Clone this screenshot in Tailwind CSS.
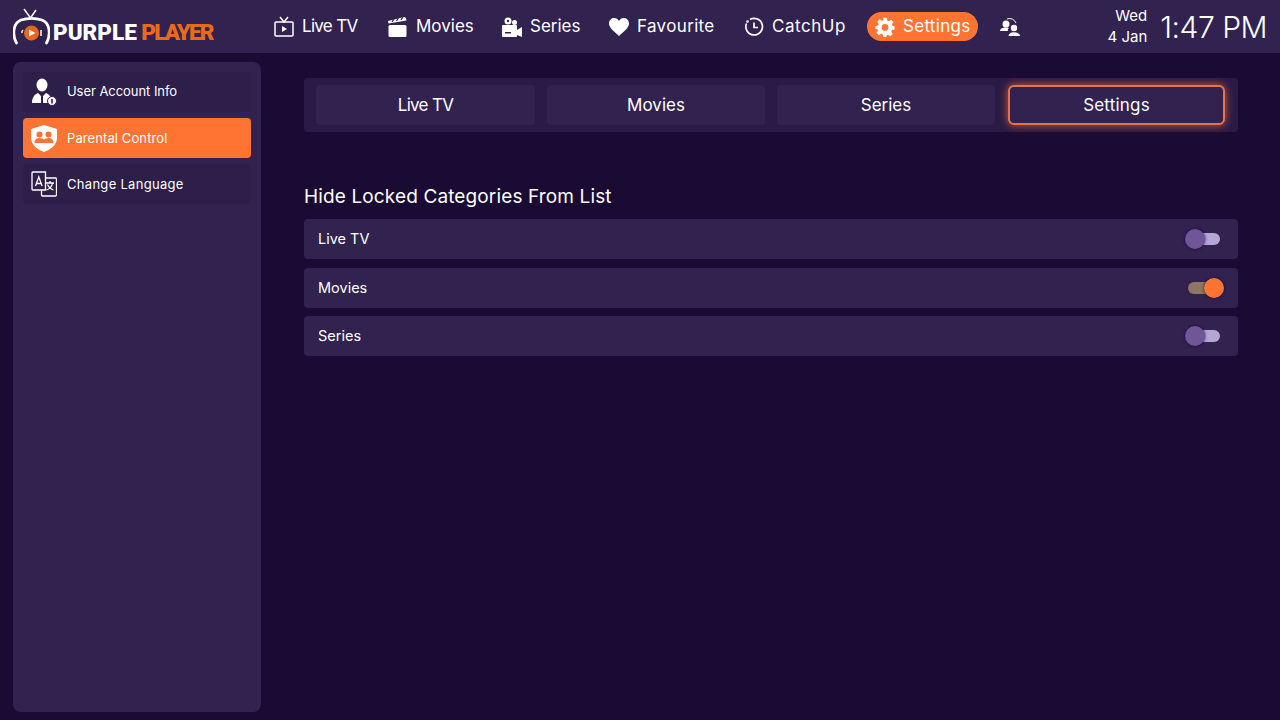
<!DOCTYPE html>
<html><head><meta charset="utf-8"><script src="https://cdn.jsdelivr.net/npm/@tailwindcss/browser@4"></script></head>
<body class="m-0">
<div class="w-[1280px] h-[720px] overflow-hidden bg-[#1a0b35] text-white font-['Inter','Noto_Sans',sans-serif] flex flex-col">
<header class="h-[53px] bg-[#32224f] flex items-center shrink-0 relative">
  <div class="w-[274px] pl-[13px] flex items-center shrink-0">
    <svg width="37" height="37" viewBox="0 0 37 37" class="mt-[-1px]" fill="none">
      <path d="M11 1 L17.500 10 L23 2" stroke="#fff" stroke-width="1.500"/>
      <path d="M3.500 35 C-1 27 0 15 8 12 C14 10 23 10 29 12 C37 15 38 27 33.500 35" stroke="#fff" stroke-width="2.800" stroke-linecap="round" fill="none"/>
      <circle cx="18.500" cy="25" r="7.500" fill="#e8651c"/><path d="M16 21.500 L22.500 25 L16 28.500Z" fill="#fff"/>
      <path d="M9 25a3 3 0 0 1 1-3M28 22v6" stroke="#fff" stroke-width="1.500"/>
    </svg>
    <div class="ml-[3px] mt-[11px] text-[22.5px] leading-none font-black font-['Roboto','Liberation_Sans',sans-serif] whitespace-nowrap">PURPLE <span class="text-[#ea6a1c] ml-[-1px] tracking-[-1.800px]">PLAYER</span></div>
  </div>
  <nav class="flex items-center text-[17px] h-full">
    <div class="flex items-center gap-[8px] w-[114px]">
      <svg width="20" height="22" viewBox="0 0 20 22" fill="none" stroke="#fff" stroke-width="1.500"><rect x="1" y="6" width="18" height="14" rx="1"/><path d="M6 1l4 5 4-5"/><path d="M8 10l5 3-5 3z" fill="#fff" stroke="none"/></svg>
      <span class="tracking-[-0.7px]">Live TV</span></div>
    <div class="flex items-center gap-[8px] w-[114px]">
      <svg width="20" height="20" viewBox="0 0 20 20" fill="#fff"><rect x="0.500" y="8" width="18" height="12" rx="1.500"/><path d="M0.500 6.500 L0 4 L16 0 Q17.500 0 18 1.500 L18.500 3.500Z"/><path d="M4 4.800L6 2M8.500 3.800L10.500 1M13 2.800L15 0" stroke="#32224f" stroke-width="1.200"/></svg>
      <span>Movies</span></div>
    <div class="flex items-center gap-[8px] w-[107px]">
      <svg width="20" height="20" viewBox="0 0 20 20" fill="#fff"><circle cx="6" cy="4" r="3.500"/><circle cx="12.500" cy="5.500" r="2.500"/><circle cx="6" cy="4" r="1.200" fill="#32224f"/><rect x="0" y="8" width="15" height="12" rx="1"/><path d="M15 13l5-3v10l-5-2z"/><rect x="3" y="15" width="6" height="1.500" fill="#32224f"/></svg>
      <span>Series</span></div>
    <div class="flex items-center gap-[8px] w-[135px]">
      <svg width="20" height="18" viewBox="0 0 20 18" fill="#fff"><path d="M10 18 C6 14 0 10 0 5.500 C0 2 2.500 0 5.200 0 C7.200 0 9 1 10 3 C11 1 12.800 0 14.800 0 C17.500 0 20 2 20 5.500 C20 10 14 14 10 18Z"/></svg>
      <span class="tracking-[0.35px]">Favourite</span></div>
    <div class="flex items-center gap-[8px] w-[123px]">
      <svg width="20" height="20" viewBox="0 0 20 20" fill="none" stroke="#fff" stroke-width="1.700"><path d="M6 2.500 A8.300 8.300 0 1 1 2.500 6.500"/><path d="M10 5.500v5h4"/><circle cx="3.500" cy="4.500" r="0.500"/></svg>
      <span class="tracking-[0.55px]">CatchUp</span></div>
    <div class="flex items-center gap-[8px] h-[29px] w-[111px] pl-[8px] rounded-full bg-[#ff7433]">
      <svg width="20" height="20" viewBox="0 0 24 24" fill="#fff"><path fill-rule="evenodd" d="M10 1h4l.7 3.200 1.900.8 2.800-1.800 2.800 2.800-1.800 2.800.8 1.900L23.500 11.400v3.600l-3.200.7-.8 1.900 1.800 2.800-2.800 2.800-2.800-1.800-1.900.8L13.600 24H10l-.7-3.200-1.900-.8-2.800 1.800-2.800-2.800 1.800-2.800-.8-1.900L.5 14.600V11l3.200-.7.8-1.900L2.700 5.600 5.500 2.800l2.800 1.800 1.900-.8zM12 8.500a4 4 0 1 0 0 8 4 4 0 0 0 0-8z"/></svg>
      <span class="tracking-[0.3px]">Settings</span></div>
    <svg class="ml-[22px]" width="20" height="18" viewBox="0 0 20 18" fill="#fff"><circle cx="6" cy="6" r="3.500"/><path d="M0 13c0-2.500 3-3.500 6-3.500 1 0 2 .1 2.800.4C8 10.800 7.800 12 7.800 13Z"/><circle cx="14" cy="10" r="3.200"/><path d="M8.500 18c0-2.500 2.500-3.800 5.500-3.800s6 1.300 6 3.800Z"/><path d="M7 1 A7 7 0 0 1 16 5" stroke="#fff" fill="none" stroke-width="1"/></svg>
  </nav>
  <div class="ml-auto pr-[13px] flex items-center">
    <div class="text-right text-[15px] leading-[21px] mr-[13px] mt-[-2px]"><div>Wed</div><div>4 Jan</div></div>
    <div class="text-[30px] leading-none whitespace-nowrap font-light tracking-[-0.5px]">1:47 PM</div>
  </div>
</header>
<div class="flex flex-1 min-h-0">
  <aside class="ml-[13px] mt-[9px] mb-[8px] w-[248px] bg-[#32224f] rounded-lg p-[10px] flex flex-col gap-[6px] text-[13px] shrink-0">
    <div class="h-[40px] rounded bg-[#2e1e4a] flex items-center pl-[8px] gap-[10px]">
      <svg width="26" height="28" viewBox="0 0 26 28" fill="#fff"><ellipse cx="11" cy="7" rx="5.500" ry="6.500"/><path d="M1 25c0-6 3-9 6-10l3 3v7zM21 25c0-6-3-9-6-10l-3 3v7z"/><circle cx="21" cy="23" r="4.500" stroke="#2e1e4a" stroke-width="1"/><rect x="20.200" y="21" width="1.600" height="4.500" fill="#2e1e4a"/></svg>
      <span class="tracking-[-0.05px]">User Account Info</span></div>
    <div class="h-[40px] rounded bg-[#ff7433] flex items-center pl-[8px] gap-[10px]">
      <svg width="26" height="28" viewBox="0 0 26 28"><path d="M13 1 L26 5 V14 C26 21 19 26 13 28 C7 26 0 21 0 14 V5Z" fill="#fff"/><circle cx="8.500" cy="10.500" r="3" fill="#ff7433"/><circle cx="17.500" cy="10.500" r="3" fill="#ff7433"/><path d="M3.500 19c0-3.500 2-5 5-5s4 1 4.500 2c.5-1 1.500-2 4.500-2s5 1.500 5 5z" fill="#ff7433"/></svg>
      <span class="pt-[2px] tracking-[0.1px]">Parental Control</span></div>
    <div class="h-[40px] rounded bg-[#2e1e4a] flex items-center pl-[8px] gap-[10px]">
      <svg width="26" height="26" viewBox="0 0 26 26" fill="none" stroke="#fff" stroke-width="1.300"><path d="M2 1h12.500v18H2a1 1 0 0 1-1-1V2a1 1 0 0 1 1-1z"/><path d="M15 7h9.500a1 1 0 0 1 1 1v16a1 1 0 0 1-1 1H11.500a1 1 0 0 1-1-1v-4.500"/><path d="M4.500 15l3.300-9 3.300 9M5.500 12.500h4.600"/><path d="M15 12h8M19 10v2M21.500 12c-.5 3-3 6-6 7M16.500 13.500c1 2.500 3.500 4.500 6 5.500"/></svg>
      <span class="pt-[2px] tracking-[0.3px]">Change Language</span></div>
  </aside>
  <main class="ml-[43px] w-[934px] pt-[25px]">
    <div class="h-[54px] rounded bg-[#2a1a47] px-[12px] flex items-center text-[17px]">
      <div class="w-[219px] h-[40px] rounded bg-[#32224f] flex items-center justify-center pt-[2px]"><span class="tracking-[-0.7px]">Live TV</span></div>
      <div class="ml-[12px] w-[218px] h-[40px] rounded bg-[#32224f] flex items-center justify-center pt-[2px]">Movies</div>
      <div class="ml-[12px] w-[218px] h-[40px] rounded bg-[#32224f] flex items-center justify-center pt-[2px]">Series</div>
      <div class="ml-[13px] w-[217px] h-[40px] rounded-md bg-[#32224f] border-2 border-[#e6734a] shadow-[0_0_8px_#d9602c] flex items-center justify-center pt-[2px]"><span class="tracking-[0.2px]">Settings</span></div>
    </div>
    <h2 class="mt-[53px] text-[19px] leading-[24px] font-normal tracking-[0.13px]">Hide Locked Categories From List</h2>
    <div class="mt-[10px] flex flex-col text-[14.5px]">
      <div class="h-[40px] rounded bg-[#32224f] flex items-center justify-between pl-[14px] pr-[18px]"><span>Live TV</span>
        <div class="relative w-[32px] h-[12px] rounded-full bg-[#b5a6d6]"><div class="absolute left-[-3px] top-[-4px] w-[20px] h-[20px] rounded-full bg-[#705599] shadow-[0_0_3px_#1a0b35]"></div></div></div>
      <div class="mt-[9px] h-[40px] rounded bg-[#32224f] flex items-center justify-between pl-[14px] pr-[18px]"><span>Movies</span>
        <div class="relative w-[32px] h-[12px] rounded-full bg-[#8e7663]"><div class="absolute right-[-4px] top-[-4px] w-[20px] h-[20px] rounded-full bg-[#ff7433] shadow-[0_0_3px_#1a0b35]"></div></div></div>
      <div class="mt-[8px] h-[40px] rounded bg-[#32224f] flex items-center justify-between pl-[14px] pr-[18px]"><span>Series</span>
        <div class="relative w-[32px] h-[12px] rounded-full bg-[#b5a6d6]"><div class="absolute left-[-3px] top-[-4px] w-[20px] h-[20px] rounded-full bg-[#705599] shadow-[0_0_3px_#1a0b35]"></div></div></div>
    </div>
  </main>
</div>
</div>
</body></html>
